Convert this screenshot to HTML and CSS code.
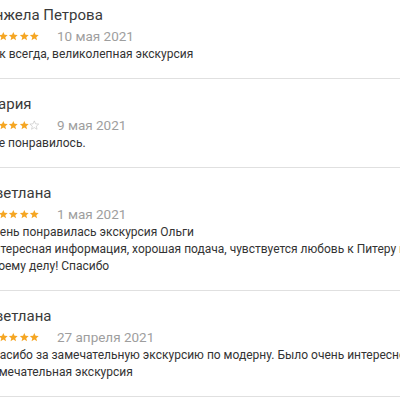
FILE: index.html
```html
<!DOCTYPE html>
<html lang="ru">
<head>
<meta charset="utf-8">
<link rel="stylesheet" href="styles.css">
</head>
<body>
<svg class="defs" width="0" height="0">
  <defs>
    <path id="star" d="M12 17.27L18.18 21l-1.64-7.03L22 9.24l-7.19-.61L12 2 9.19 8.63 2 9.24l5.46 4.73L5.82 21z"/>
  </defs>
</svg>
<div class="reviews">
  <div class="review">
    <div class="name">Анжела Петрова</div>
    <div class="meta">
      <div class="stars">
        <svg class="star on" viewBox="0 0 24 24"><use href="#star"/></svg>
        <svg class="star on" viewBox="0 0 24 24"><use href="#star"/></svg>
        <svg class="star on" viewBox="0 0 24 24"><use href="#star"/></svg>
        <svg class="star on" viewBox="0 0 24 24"><use href="#star"/></svg>
        <svg class="star on" viewBox="0 0 24 24"><use href="#star"/></svg>
      </div>
      <span class="date">10 мая 2021</span>
    </div>
    <p class="text">Как всегда, великолепная экскурсия</p>
  </div>
  <div class="review">
    <div class="name">Мария</div>
    <div class="meta">
      <div class="stars">
        <svg class="star on" viewBox="0 0 24 24"><use href="#star"/></svg>
        <svg class="star on" viewBox="0 0 24 24"><use href="#star"/></svg>
        <svg class="star on" viewBox="0 0 24 24"><use href="#star"/></svg>
        <svg class="star on" viewBox="0 0 24 24"><use href="#star"/></svg>
        <svg class="star off" viewBox="0 0 24 24"><use href="#star"/></svg>
      </div>
      <span class="date">9 мая 2021</span>
    </div>
    <p class="text">Все понравилось.</p>
  </div>
  <div class="review">
    <div class="name">Светлана</div>
    <div class="meta">
      <div class="stars">
        <svg class="star on" viewBox="0 0 24 24"><use href="#star"/></svg>
        <svg class="star on" viewBox="0 0 24 24"><use href="#star"/></svg>
        <svg class="star on" viewBox="0 0 24 24"><use href="#star"/></svg>
        <svg class="star on" viewBox="0 0 24 24"><use href="#star"/></svg>
        <svg class="star on" viewBox="0 0 24 24"><use href="#star"/></svg>
      </div>
      <span class="date">1 мая 2021</span>
    </div>
    <p class="text">Очень понравилась экскурсия Ольги<br>Интересная информация, хорошая подача, чувствуется любовь к Питеру и своему делу! Спасибо</p>
  </div>
  <div class="review">
    <div class="name">Светлана</div>
    <div class="meta">
      <div class="stars">
        <svg class="star on" viewBox="0 0 24 24"><use href="#star"/></svg>
        <svg class="star on" viewBox="0 0 24 24"><use href="#star"/></svg>
        <svg class="star on" viewBox="0 0 24 24"><use href="#star"/></svg>
        <svg class="star on" viewBox="0 0 24 24"><use href="#star"/></svg>
        <svg class="star on" viewBox="0 0 24 24"><use href="#star"/></svg>
      </div>
      <span class="date">27 апреля 2021</span>
    </div>
    <p class="text">Спасибо за замечательную экскурсию по модерну. Было очень интересно<br>Замечательная экскурсия</p>
  </div>
</div>
</body>
</html>
```

FILE: styles.css
```css
html, body {
  margin: 0;
  padding: 0;
  background: #ffffff;
  overflow: hidden;
}

body {
  width: 400px;
  height: 400px;
  font-family: Roboto, "Liberation Sans", sans-serif;
  color: #333333;
}

.defs {
  display: block;
  width: 0;
  height: 0;
}

.reviews {
  width: 520px;
  margin-left: -15px;
  margin-top: -10px;
}

.review {
  padding: 14px 0 15px 0;
  border-bottom: 1px solid #e0e0e0;
}

.name {
  font-size: 15px;
  line-height: 22px;
  color: #3a3a3a;
}

.meta {
  display: flex;
  align-items: center;
  height: 20px;
}

.stars {
  display: flex;
  margin-left: 2px;
}

.star {
  width: 10.6px;
  height: 10.6px;
  display: block;
}

.star.on {
  fill: #f5a623;
}

.star.off {
  fill: none;
  stroke: #bdbdbd;
  stroke-width: 1.3;
}

.date {
  margin-left: 17px;
  font-size: 13.5px;
  color: #9e9e9e;
}

.text {
  margin: 0;
  width: 440px;
  font-size: 12px;
  line-height: 17px;
  color: #333333;
}
```
